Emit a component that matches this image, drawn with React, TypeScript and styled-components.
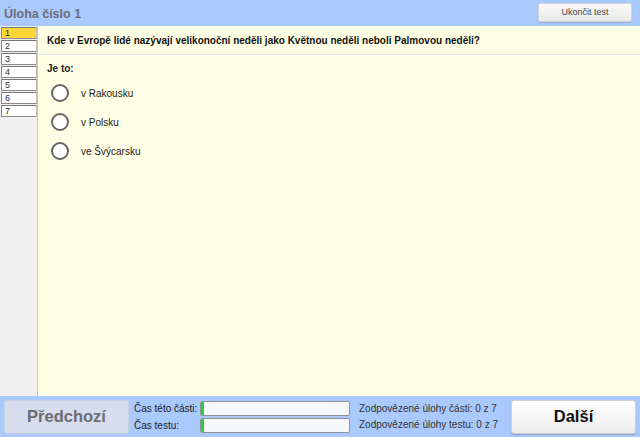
import React from 'react';
import styled, { createGlobalStyle } from 'styled-components';

const GlobalStyle = createGlobalStyle`
  html, body {
    margin: 0;
    padding: 0;
    width: 640px;
    height: 437px;
    overflow: hidden;
    font-family: Arial, 'Liberation Sans', sans-serif;
  }
  #root {
    height: 100%;
  }
`;

const Page = styled.div`
  display: flex;
  flex-direction: column;
  width: 640px;
  height: 437px;
  background: #aac9fc;
`;

const Header = styled.div`
  height: 26px;
  display: flex;
  align-items: center;
  justify-content: space-between;
  padding: 0 8px 0 4px;
  flex-shrink: 0;
`;

const Title = styled.div`
  font-size: 12.5px;
  font-weight: bold;
  color: #6b6f78;
  padding-top: 1px;
`;

const EndButton = styled.button`
  width: 94px;
  height: 19px;
  margin-top: -2px;
  border: 1px solid #cfd3da;
  border-radius: 2px;
  background: linear-gradient(#fafafa, #e9e9e9);
  box-shadow: 0 1px 1px rgba(0, 0, 0, 0.15);
  font-family: inherit;
  font-size: 9px;
  color: #444;
  padding: 0;
`;

const Body = styled.div`
  flex: 1;
  display: flex;
  min-height: 0;
`;

const Sidebar = styled.div`
  width: 38px;
  background: #f0f0f0;
  border-right: 1px solid #c8c8c8;
  display: flex;
  flex-direction: column;
  gap: 1px;
  padding: 1px 0 0 1px;
  box-sizing: border-box;
  flex-shrink: 0;
`;

const NavItem = styled.div<{ $active?: boolean }>`
  width: 36px;
  height: 12px;
  box-sizing: border-box;
  border: 1px solid #8a8a8a;
  border-right-color: #bbb;
  border-top-color: #777;
  background: ${(p) => (p.$active ? '#fcd737' : '#fff')};
  font-size: 9px;
  line-height: 10px;
  padding-left: 3px;
  color: #333;
`;

const Main = styled.div`
  flex: 1;
  background: #ffffe6;
  display: flex;
  flex-direction: column;
`;

const Question = styled.div`
  font-size: 10px;
  font-weight: bold;
  color: #111;
  padding: 9px 0 8px 9px;
  border-bottom: 1px solid #dde4f0;
`;

const Prompt = styled.div`
  font-size: 10px;
  font-weight: bold;
  color: #222;
  padding: 8px 0 0 9px;
`;

const Options = styled.div`
  display: flex;
  flex-direction: column;
  gap: 11px;
  padding: 10px 0 0 13px;
`;

const Option = styled.label`
  display: flex;
  align-items: center;
  gap: 12px;
  height: 18px;
  font-size: 10px;
  color: #222;
`;

const Radio = styled.span`
  width: 14px;
  height: 14px;
  border: 2px solid #666;
  border-radius: 50%;
  background: #fff;
  flex-shrink: 0;
`;

const Footer = styled.div`
  height: 41px;
  flex-shrink: 0;
  display: flex;
  align-items: center;
  padding: 0 4px 0 4px;
  gap: 5px;
`;

const NavButton = styled.button<{ $primary?: boolean }>`
  width: 125px;
  height: 34px;
  border-radius: 3px;
  font-family: inherit;
  font-size: 16.5px;
  font-weight: bold;
  padding: 0;
  border: ${(p) => (p.$primary ? '1px solid #d0d0d0' : '1px solid #c9d2e2')};
  background: ${(p) => (p.$primary ? 'linear-gradient(#ffffff, #ececec)' : '#d6dded')};
  color: ${(p) => (p.$primary ? '#111' : '#6a6d74')};
  box-shadow: ${(p) => (p.$primary ? '0 1px 1px rgba(0,0,0,0.2)' : 'none')};
`;

const TimeGrid = styled.div`
  display: grid;
  grid-template-columns: 66px 150px;
  row-gap: 2px;
  align-items: center;
  font-size: 10px;
  color: #222;
`;

const Bar = styled.div`
  height: 15px;
  box-sizing: border-box;
  border: 1px solid #8d929c;
  border-radius: 2px;
  background: #f6f7f9;
  overflow: hidden;
  display: flex;
`;

const BarFill = styled.div`
  background: #2ecc40;
  height: 100%;
`;

const Stats = styled.div`
  flex: 1;
  display: flex;
  flex-direction: column;
  gap: 5px;
  padding-left: 4px;
  font-size: 10px;
  color: #333;
`;

const items = [1, 2, 3, 4, 5, 6, 7];
const options = ['v Rakousku', 'v Polsku', 've Švýcarsku'];

export default function App() {
  return (
    <>
      <GlobalStyle />
      <Page>
        <Header>
          <Title>Úloha číslo 1</Title>
          <EndButton>Ukončit test</EndButton>
        </Header>
        <Body>
          <Sidebar>
            {items.map((n) => (
              <NavItem key={n} $active={n === 1}>
                {n}
              </NavItem>
            ))}
          </Sidebar>
          <Main>
            <Question>
              Kde v Evropě lidé nazývají velikonoční neděli jako Květnou neděli neboli Palmovou neděli?
            </Question>
            <Prompt>Je to:</Prompt>
            <Options>
              {options.map((o) => (
                <Option key={o}>
                  <Radio />
                  {o}
                </Option>
              ))}
            </Options>
          </Main>
        </Body>
        <Footer>
          <NavButton>Předchozí</NavButton>
          <TimeGrid>
            <span>Čas této části:</span>
            <Bar>
              <BarFill style={{ width: '3px' }} />
            </Bar>
            <span>Čas testu:</span>
            <Bar>
              <BarFill style={{ width: '3px' }} />
            </Bar>
          </TimeGrid>
          <Stats>
            <span>Zodpovězené úlohy části: 0 z 7</span>
            <span>Zodpovězené úlohy testu: 0 z 7</span>
          </Stats>
          <NavButton $primary>Další</NavButton>
        </Footer>
      </Page>
    </>
  );
}
